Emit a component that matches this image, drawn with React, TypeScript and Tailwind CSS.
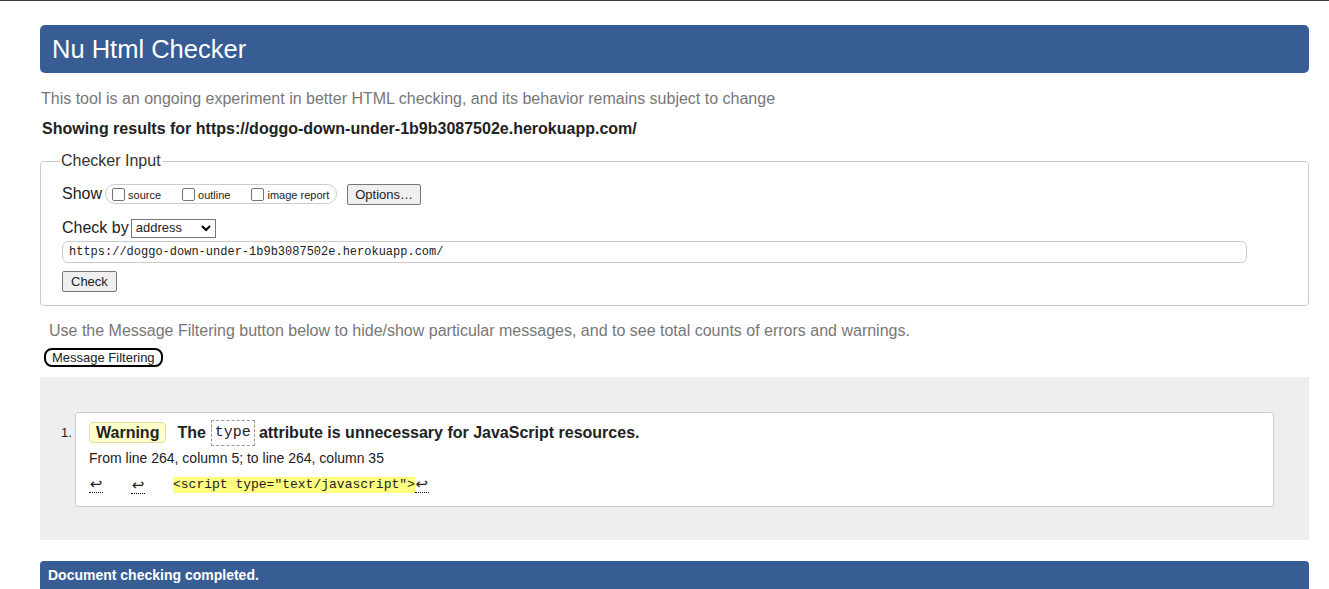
import React from 'react';

const sans = { fontFamily: '"Liberation Sans", Arial, sans-serif' };

function Checkbox({ label }: { label: string }) {
  return (
    <label className="flex items-center gap-[3px] text-[11px] text-[#222]">
      <span className="inline-block h-[13px] w-[13px] rounded-[2px] border border-[#767676] bg-white" />
      <span className="mt-[3px]">{label}</span>
    </label>
  );
}

function Ret() {
  return (
    <span className="inline-block w-[14px] border-b border-dotted border-black text-center text-[15px] leading-[15px] font-['DejaVu_Sans',sans-serif]">
      ↩
    </span>
  );
}

export default function App() {
  return (
    <div className="min-h-[589px] border-t border-[#3a3a3a] bg-white text-[#222]" style={sans}>
      <div className="ml-[40px] mr-[20px] pt-[24px]">
        <header className="flex h-[48px] items-center rounded-[5px] bg-[#375d94] px-[12px]">
          <h1 className="text-[25.5px] text-white">Nu Html Checker</h1>
        </header>

        <p className="mt-[17px] pl-[1px] text-[16px] leading-[18px] text-[#777]">
          This tool is an ongoing experiment in better HTML checking, and its behavior remains subject to change
        </p>
        <p className="mt-[12px] pl-[2px] text-[16px] leading-[18px] font-bold text-[#222]">
          Showing results for https://doggo-down-under-1b9b3087502e.herokuapp.com/
        </p>

        <fieldset className="mt-[11px] rounded-[4px] border border-[#ccc] pb-[12px] pl-[21px] pr-[60px]">
          <legend className="ml-[-2px] px-[1px] text-[16px] text-[#333]">Checker Input</legend>
          <div className="mt-[9px] flex items-center">
            <span className="text-[16px]">Show</span>
            <div className="ml-[3px] flex h-[20px] items-center gap-[21px] rounded-full border border-[#ccc] pl-[6px] pr-[7px]">
              <Checkbox label="source" />
              <Checkbox label="outline" />
              <Checkbox label="image report" />
            </div>
            <button className="ml-[10px] h-[21px] rounded-[2px] border border-[#767676] bg-[#efefef] px-[7px] text-[13px]">
              Options…
            </button>
          </div>
          <div className="mt-[10px] flex items-center">
            <span className="text-[16px]">Check by</span>
            <div className="ml-[2px] flex h-[19px] w-[85px] items-center justify-between border border-[#767676] bg-white pl-[4px] pr-[4px] text-[13px]">
              <span>address</span>
              <svg width="10" height="7" viewBox="0 0 10 7">
                <path d="M1 1l4 4 4-4" fill="none" stroke="#000" strokeWidth="2" />
              </svg>
            </div>
          </div>
          <div className="mt-[1px] flex h-[22px] w-[1185px] items-center rounded-[6px] border border-[#ccc] pl-[6px] text-[12px] font-['Liberation_Mono',monospace]">
            https://doggo-down-under-1b9b3087502e.herokuapp.com/
          </div>
          <button className="mt-[8px] h-[21px] rounded-[2px] border border-[#767676] bg-[#efefef] px-[8px] text-[13px]">
            Check
          </button>
        </fieldset>

        <p className="mt-[16px] pl-[9px] text-[16px] leading-[18px] text-[#777]">
          Use the Message Filtering button below to hide/show particular messages, and to see total counts of errors and warnings.
        </p>
        <button className="ml-[4px] mt-[8px] h-[19px] rounded-[8px] border-2 border-black bg-white px-[6px] text-[13px] leading-[14px]">
          Message Filtering
        </button>

        <section className="mt-[8px] bg-[#eee] pb-[33px] pl-[35px] pr-[35px] pt-[35px]">
          <div className="flex items-start rounded-[3px] border border-[#ccc] bg-white pb-[9px] pt-[7px]">
            <span className="ml-[-15px] mt-[3px] w-[28px] text-[13px]">1.</span>
            <div>
              <div className="flex items-center">
                <span className="rounded-[4px] border border-[#e0e0a0] bg-[#ffffcc] px-[6px] text-[16px] font-bold leading-[19px]">
                  Warning
                </span>
                <span className="ml-[11px] text-[16px] font-bold">The</span>
                <span className="ml-[5px] border border-dashed border-[#999] px-[3px] py-[2px] text-[15px] leading-[20px] font-['Liberation_Mono',monospace]">
                  type
                </span>
                <span className="ml-[4px] text-[16px] font-bold">
                  attribute is unnecessary for JavaScript resources.
                </span>
              </div>
              <p className="mt-[4px] text-[14px] leading-[16px]">From line 264, column 5; to line 264, column 35</p>
              <div className="mt-[7px] flex items-center">
                <Ret />
                <span className="ml-[28px]"><Ret /></span>
                <span className="ml-[28px] bg-[#ffff80] text-[13px] leading-[16px] font-['Liberation_Mono',monospace]">
                  {'<script type="text/javascript">'}
                </span>
                <Ret />
              </div>
            </div>
          </div>
        </section>

        <div className="mt-[21px] flex h-[30px] items-center rounded-t-[4px] bg-[#375d94] px-[8px]">
          <span className="text-[14px] font-bold text-white">Document checking completed.</span>
        </div>
      </div>
    </div>
  );
}
